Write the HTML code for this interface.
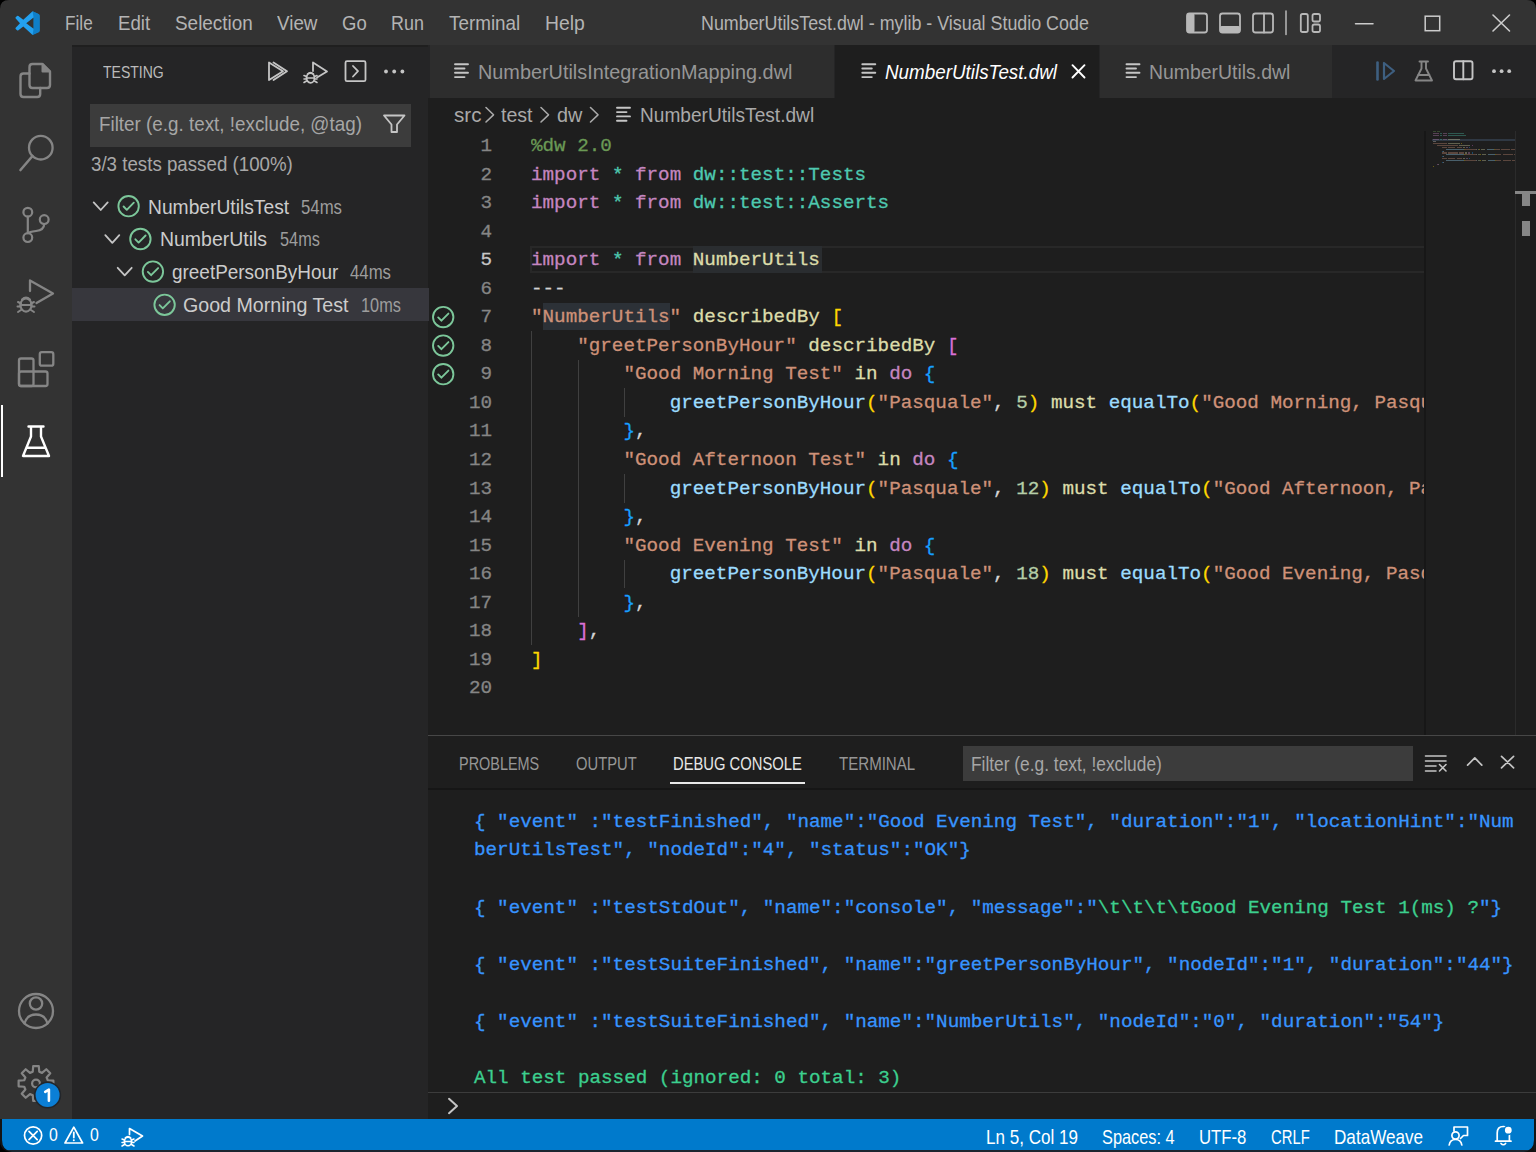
<!DOCTYPE html>
<html><head><meta charset="utf-8"><style>
html,body{margin:0;padding:0;}
body{width:1536px;height:1152px;position:relative;overflow:hidden;background:#1e1e1e;}
.t{position:absolute;white-space:pre;font-family:"Liberation Sans",sans-serif;transform-origin:0 0;}
.m{position:absolute;white-space:pre;font-family:"Liberation Mono",monospace;-webkit-text-stroke:0.3px currentColor;}
.m span{-webkit-text-stroke:0.3px currentColor;}
svg.ov{position:absolute;left:0;top:0;}
</style></head><body>
<div style="position:absolute;left:0.00px;top:0.00px;width:1536.00px;height:45.00px;background:#333333;"></div>
<div style="position:absolute;left:0.00px;top:45.00px;width:72.00px;height:1074.00px;background:#333333;"></div>
<div style="position:absolute;left:72.00px;top:45.00px;width:356.00px;height:1074.00px;background:#252526;"></div>
<div style="position:absolute;left:72.00px;top:45.00px;width:356.00px;height:2.00px;background:#1f1f1f;"></div>
<div style="position:absolute;left:428.00px;top:45.00px;width:1108.00px;height:53.00px;background:#252526;"></div>
<div style="position:absolute;left:428.00px;top:98.00px;width:1108.00px;height:637.00px;background:#1e1e1e;"></div>
<div style="position:absolute;left:428.00px;top:735.00px;width:1108.00px;height:384.00px;background:#1e1e1e;"></div>
<div style="position:absolute;left:428.00px;top:735.00px;width:1108.00px;height:1.00px;background:#474747;"></div>
<div style="position:absolute;left:0.00px;top:1119.00px;width:1536.00px;height:33.00px;background:#007acc;"></div>
<div class="t" style="left:65.40px;top:11.96px;font-size:20.349px;line-height:22.75px;color:#b4b4b4;transform:scaleX(0.8450);">File</div>
<div class="t" style="left:118.30px;top:11.96px;font-size:20.349px;line-height:22.75px;color:#b4b4b4;transform:scaleX(0.9184);">Edit</div>
<div class="t" style="left:174.80px;top:11.96px;font-size:20.349px;line-height:22.75px;color:#b4b4b4;transform:scaleX(0.9305);">Selection</div>
<div class="t" style="left:277.00px;top:11.96px;font-size:20.349px;line-height:22.75px;color:#b4b4b4;transform:scaleX(0.9249);">View</div>
<div class="t" style="left:341.80px;top:11.96px;font-size:20.349px;line-height:22.75px;color:#b4b4b4;transform:scaleX(0.9099);">Go</div>
<div class="t" style="left:391.20px;top:11.96px;font-size:20.349px;line-height:22.75px;color:#b4b4b4;transform:scaleX(0.8816);">Run</div>
<div class="t" style="left:449.00px;top:11.96px;font-size:20.349px;line-height:22.75px;color:#b4b4b4;transform:scaleX(0.9272);">Terminal</div>
<div class="t" style="left:545.40px;top:11.96px;font-size:20.349px;line-height:22.75px;color:#b4b4b4;transform:scaleX(0.9508);">Help</div>
<div class="t" style="left:700.60px;top:11.96px;font-size:20.349px;line-height:22.75px;color:#b4b4b4;transform:scaleX(0.8787);">NumberUtilsTest.dwl - mylib - Visual Studio Code</div>
<div class="t" style="left:103.30px;top:63.16px;font-size:17.151px;line-height:19.18px;color:#bbbbbb;transform:scaleX(0.8179);">TESTING</div>
<div style="position:absolute;left:90.00px;top:104.00px;width:321.00px;height:43.00px;background:#3c3c3c;"></div>
<div class="t" style="left:98.60px;top:112.96px;font-size:20.349px;line-height:22.75px;color:#a6a6a6;transform:scaleX(0.9262);">Filter (e.g. text, !exclude, @tag)</div>
<div class="t" style="left:91.00px;top:153.19px;font-size:19.767px;line-height:22.10px;color:#a8a8a8;transform:scaleX(0.9476);">3/3 tests passed (100%)</div>
<div style="position:absolute;left:72.00px;top:288.00px;width:357.00px;height:32.60px;background:#37373d;"></div>
<div class="t" style="left:147.50px;top:195.69px;font-size:19.767px;line-height:22.10px;color:#cccccc;transform:scaleX(0.9745);">NumberUtilsTest</div>
<div class="t" style="left:301.00px;top:195.69px;font-size:19.767px;line-height:22.10px;color:#9d9d9d;transform:scaleX(0.8483);">54ms</div>
<div class="t" style="left:159.90px;top:228.49px;font-size:19.767px;line-height:22.10px;color:#cccccc;transform:scaleX(0.9849);">NumberUtils</div>
<div class="t" style="left:280.10px;top:228.49px;font-size:19.767px;line-height:22.10px;color:#9d9d9d;transform:scaleX(0.8256);">54ms</div>
<div class="t" style="left:171.60px;top:260.89px;font-size:19.767px;line-height:22.10px;color:#cccccc;transform:scaleX(0.9585);">greetPersonByHour</div>
<div class="t" style="left:349.70px;top:260.89px;font-size:19.767px;line-height:22.10px;color:#9d9d9d;transform:scaleX(0.8483);">44ms</div>
<div class="t" style="left:183.30px;top:293.69px;font-size:19.767px;line-height:22.10px;color:#cccccc;transform:scaleX(0.9942);">Good Morning Test</div>
<div class="t" style="left:361.40px;top:293.69px;font-size:19.767px;line-height:22.10px;color:#9d9d9d;transform:scaleX(0.8256);">10ms</div>
<div style="position:absolute;left:430.00px;top:45.00px;width:404.00px;height:53.00px;background:#2d2d2d;"></div>
<div style="position:absolute;left:835.00px;top:45.00px;width:264.00px;height:53.00px;background:#1e1e1e;"></div>
<div style="position:absolute;left:1100.00px;top:45.00px;width:232.00px;height:53.00px;background:#2d2d2d;"></div>
<div class="t" style="left:477.60px;top:61.26px;font-size:20.349px;line-height:22.75px;color:#969696;transform:scaleX(0.9763);">NumberUtilsIntegrationMapping.dwl</div>
<div class="t" style="left:884.80px;top:61.26px;font-size:20.349px;line-height:22.75px;color:#ffffff;font-style:italic;transform:scaleX(0.9265);">NumberUtilsTest.dwl</div>
<div class="t" style="left:1149.40px;top:61.26px;font-size:20.349px;line-height:22.75px;color:#969696;transform:scaleX(0.9546);">NumberUtils.dwl</div>
<div class="t" style="left:453.50px;top:104.16px;font-size:20.349px;line-height:22.75px;color:#a9a9a9;transform:scaleX(1.0138);">src</div>
<div class="t" style="left:501.00px;top:104.16px;font-size:20.349px;line-height:22.75px;color:#a9a9a9;transform:scaleX(0.9633);">test</div>
<div class="t" style="left:556.80px;top:104.16px;font-size:20.349px;line-height:22.75px;color:#a9a9a9;transform:scaleX(0.9744);">dw</div>
<div class="t" style="left:640.00px;top:104.16px;font-size:20.349px;line-height:22.75px;color:#a9a9a9;transform:scaleX(0.9399);">NumberUtilsTest.dwl</div>
<div style="position:absolute;left:530.00px;top:246.32px;width:894.00px;height:27.00px;background:transparent;box-sizing:border-box;border:2px solid #282828;border-right:none;"></div>
<div style="position:absolute;left:693.00px;top:246.32px;width:129.00px;height:27.00px;background:#2a2d30;"></div>
<div style="position:absolute;left:542.60px;top:303.38px;width:127.00px;height:27.00px;background:#2c3137;"></div>
<div style="position:absolute;left:531.00px;top:331.41px;width:1.20px;height:313.83px;background:#404040;"></div>
<div style="position:absolute;left:577.50px;top:359.94px;width:1.20px;height:256.77px;background:#404040;"></div>
<div style="position:absolute;left:624.00px;top:388.47px;width:1.20px;height:28.53px;background:#404040;"></div>
<div style="position:absolute;left:624.00px;top:474.06px;width:1.20px;height:28.53px;background:#404040;"></div>
<div style="position:absolute;left:624.00px;top:559.65px;width:1.20px;height:28.53px;background:#404040;"></div>
<div style="position:absolute;left:531px;top:130px;width:893px;height:605px;overflow:hidden">
<div class="m" style="left:0.00px;top:6.16px;font-size:19.250px;line-height:21.83px"><span style="color:#6a9955">%dw 2.0</span></div>
<div class="m" style="left:0.00px;top:34.69px;font-size:19.250px;line-height:21.83px"><span style="color:#c586c0">import</span><span style="color:#d4d4d4"> </span><span style="color:#4ec9b0">*</span><span style="color:#d4d4d4"> </span><span style="color:#c586c0">from</span><span style="color:#d4d4d4"> </span><span style="color:#4ec9b0">dw::test::Tests</span></div>
<div class="m" style="left:0.00px;top:63.22px;font-size:19.250px;line-height:21.83px"><span style="color:#c586c0">import</span><span style="color:#d4d4d4"> </span><span style="color:#4ec9b0">*</span><span style="color:#d4d4d4"> </span><span style="color:#c586c0">from</span><span style="color:#d4d4d4"> </span><span style="color:#4ec9b0">dw::test::Asserts</span></div>
<div class="m" style="left:0.00px;top:120.28px;font-size:19.250px;line-height:21.83px"><span style="color:#c586c0">import</span><span style="color:#d4d4d4"> </span><span style="color:#4ec9b0">*</span><span style="color:#d4d4d4"> </span><span style="color:#c586c0">from</span><span style="color:#d4d4d4"> </span><span style="color:#dcdcaa">NumberUtils</span></div>
<div class="m" style="left:0.00px;top:148.81px;font-size:19.250px;line-height:21.83px"><span style="color:#d4d4d4">---</span></div>
<div class="m" style="left:0.00px;top:177.34px;font-size:19.250px;line-height:21.83px"><span style="color:#ce9178">&quot;NumberUtils&quot;</span><span style="color:#d4d4d4"> </span><span style="color:#dcdcaa">describedBy</span><span style="color:#d4d4d4"> </span><span style="color:#ffd700">[</span></div>
<div class="m" style="left:0.00px;top:205.87px;font-size:19.250px;line-height:21.83px"><span style="color:#d4d4d4">    </span><span style="color:#ce9178">&quot;greetPersonByHour&quot;</span><span style="color:#d4d4d4"> </span><span style="color:#dcdcaa">describedBy</span><span style="color:#d4d4d4"> </span><span style="color:#da70d6">[</span></div>
<div class="m" style="left:0.00px;top:234.40px;font-size:19.250px;line-height:21.83px"><span style="color:#d4d4d4">        </span><span style="color:#ce9178">&quot;Good Morning Test&quot;</span><span style="color:#d4d4d4"> </span><span style="color:#dcdcaa">in</span><span style="color:#d4d4d4"> </span><span style="color:#c586c0">do</span><span style="color:#d4d4d4"> </span><span style="color:#179fff">{</span></div>
<div class="m" style="left:0.00px;top:262.93px;font-size:19.250px;line-height:21.83px"><span style="color:#d4d4d4">            </span><span style="color:#9cdcfe">greetPersonByHour</span><span style="color:#ffd700">(</span><span style="color:#ce9178">&quot;Pasquale&quot;</span><span style="color:#d4d4d4">, </span><span style="color:#b5cea8">5</span><span style="color:#ffd700">)</span><span style="color:#d4d4d4"> </span><span style="color:#dcdcaa">must</span><span style="color:#d4d4d4"> </span><span style="color:#9cdcfe">equalTo</span><span style="color:#ffd700">(</span><span style="color:#ce9178">&quot;Good Morning, Pasquale&quot;</span><span style="color:#ffd700">)</span></div>
<div class="m" style="left:0.00px;top:291.46px;font-size:19.250px;line-height:21.83px"><span style="color:#d4d4d4">        </span><span style="color:#179fff">}</span><span style="color:#d4d4d4">,</span></div>
<div class="m" style="left:0.00px;top:319.99px;font-size:19.250px;line-height:21.83px"><span style="color:#d4d4d4">        </span><span style="color:#ce9178">&quot;Good Afternoon Test&quot;</span><span style="color:#d4d4d4"> </span><span style="color:#dcdcaa">in</span><span style="color:#d4d4d4"> </span><span style="color:#c586c0">do</span><span style="color:#d4d4d4"> </span><span style="color:#179fff">{</span></div>
<div class="m" style="left:0.00px;top:348.52px;font-size:19.250px;line-height:21.83px"><span style="color:#d4d4d4">            </span><span style="color:#9cdcfe">greetPersonByHour</span><span style="color:#ffd700">(</span><span style="color:#ce9178">&quot;Pasquale&quot;</span><span style="color:#d4d4d4">, </span><span style="color:#b5cea8">12</span><span style="color:#ffd700">)</span><span style="color:#d4d4d4"> </span><span style="color:#dcdcaa">must</span><span style="color:#d4d4d4"> </span><span style="color:#9cdcfe">equalTo</span><span style="color:#ffd700">(</span><span style="color:#ce9178">&quot;Good Afternoon, Pasquale&quot;</span><span style="color:#ffd700">)</span></div>
<div class="m" style="left:0.00px;top:377.05px;font-size:19.250px;line-height:21.83px"><span style="color:#d4d4d4">        </span><span style="color:#179fff">}</span><span style="color:#d4d4d4">,</span></div>
<div class="m" style="left:0.00px;top:405.58px;font-size:19.250px;line-height:21.83px"><span style="color:#d4d4d4">        </span><span style="color:#ce9178">&quot;Good Evening Test&quot;</span><span style="color:#d4d4d4"> </span><span style="color:#dcdcaa">in</span><span style="color:#d4d4d4"> </span><span style="color:#c586c0">do</span><span style="color:#d4d4d4"> </span><span style="color:#179fff">{</span></div>
<div class="m" style="left:0.00px;top:434.11px;font-size:19.250px;line-height:21.83px"><span style="color:#d4d4d4">            </span><span style="color:#9cdcfe">greetPersonByHour</span><span style="color:#ffd700">(</span><span style="color:#ce9178">&quot;Pasquale&quot;</span><span style="color:#d4d4d4">, </span><span style="color:#b5cea8">18</span><span style="color:#ffd700">)</span><span style="color:#d4d4d4"> </span><span style="color:#dcdcaa">must</span><span style="color:#d4d4d4"> </span><span style="color:#9cdcfe">equalTo</span><span style="color:#ffd700">(</span><span style="color:#ce9178">&quot;Good Evening, Pasquale&quot;</span><span style="color:#ffd700">)</span></div>
<div class="m" style="left:0.00px;top:462.64px;font-size:19.250px;line-height:21.83px"><span style="color:#d4d4d4">        </span><span style="color:#179fff">}</span><span style="color:#d4d4d4">,</span></div>
<div class="m" style="left:0.00px;top:491.17px;font-size:19.250px;line-height:21.83px"><span style="color:#d4d4d4">    </span><span style="color:#da70d6">]</span><span style="color:#d4d4d4">,</span></div>
<div class="m" style="left:0.00px;top:519.70px;font-size:19.250px;line-height:21.83px"><span style="color:#ffd700">]</span></div>
</div>
<div class="m" style="left:480.45px;top:136.16px;font-size:19.250px;line-height:21.83px"><span style="color:#858585">1</span></div>
<div class="m" style="left:480.45px;top:164.69px;font-size:19.250px;line-height:21.83px"><span style="color:#858585">2</span></div>
<div class="m" style="left:480.45px;top:193.22px;font-size:19.250px;line-height:21.83px"><span style="color:#858585">3</span></div>
<div class="m" style="left:480.45px;top:221.75px;font-size:19.250px;line-height:21.83px"><span style="color:#858585">4</span></div>
<div class="m" style="left:480.45px;top:250.28px;font-size:19.250px;line-height:21.83px"><span style="color:#c6c6c6">5</span></div>
<div class="m" style="left:480.45px;top:278.81px;font-size:19.250px;line-height:21.83px"><span style="color:#858585">6</span></div>
<div class="m" style="left:480.45px;top:307.34px;font-size:19.250px;line-height:21.83px"><span style="color:#858585">7</span></div>
<div class="m" style="left:480.45px;top:335.87px;font-size:19.250px;line-height:21.83px"><span style="color:#858585">8</span></div>
<div class="m" style="left:480.45px;top:364.40px;font-size:19.250px;line-height:21.83px"><span style="color:#858585">9</span></div>
<div class="m" style="left:468.90px;top:392.93px;font-size:19.250px;line-height:21.83px"><span style="color:#858585">10</span></div>
<div class="m" style="left:468.90px;top:421.46px;font-size:19.250px;line-height:21.83px"><span style="color:#858585">11</span></div>
<div class="m" style="left:468.90px;top:449.99px;font-size:19.250px;line-height:21.83px"><span style="color:#858585">12</span></div>
<div class="m" style="left:468.90px;top:478.52px;font-size:19.250px;line-height:21.83px"><span style="color:#858585">13</span></div>
<div class="m" style="left:468.90px;top:507.05px;font-size:19.250px;line-height:21.83px"><span style="color:#858585">14</span></div>
<div class="m" style="left:468.90px;top:535.58px;font-size:19.250px;line-height:21.83px"><span style="color:#858585">15</span></div>
<div class="m" style="left:468.90px;top:564.11px;font-size:19.250px;line-height:21.83px"><span style="color:#858585">16</span></div>
<div class="m" style="left:468.90px;top:592.64px;font-size:19.250px;line-height:21.83px"><span style="color:#858585">17</span></div>
<div class="m" style="left:468.90px;top:621.17px;font-size:19.250px;line-height:21.83px"><span style="color:#858585">18</span></div>
<div class="m" style="left:468.90px;top:649.70px;font-size:19.250px;line-height:21.83px"><span style="color:#858585">19</span></div>
<div class="m" style="left:468.90px;top:678.23px;font-size:19.250px;line-height:21.83px"><span style="color:#858585">20</span></div>
<div style="position:absolute;left:1424.00px;top:131.00px;width:2.00px;height:604.00px;background:#171717;"></div>
<div style="position:absolute;left:1515.00px;top:131.00px;width:1.00px;height:604.00px;background:#2b2b2b;"></div>
<div class="t" style="left:459.20px;top:754.14px;font-size:18.605px;line-height:20.80px;color:#969696;transform:scaleX(0.7767);">PROBLEMS</div>
<div class="t" style="left:576.20px;top:754.14px;font-size:18.605px;line-height:20.80px;color:#969696;transform:scaleX(0.7936);">OUTPUT</div>
<div class="t" style="left:673.20px;top:754.14px;font-size:18.605px;line-height:20.80px;color:#e7e7e7;transform:scaleX(0.7942);">DEBUG CONSOLE</div>
<div class="t" style="left:838.50px;top:754.14px;font-size:18.605px;line-height:20.80px;color:#969696;transform:scaleX(0.8101);">TERMINAL</div>
<div style="position:absolute;left:669.80px;top:781.50px;width:135.00px;height:2.00px;background:#e7e7e7;"></div>
<div style="position:absolute;left:428.00px;top:788.00px;width:1108.00px;height:2.00px;background:#161616;"></div>
<div style="position:absolute;left:963.30px;top:745.50px;width:449.30px;height:35.00px;background:#3c3c3c;"></div>
<div class="t" style="left:971.00px;top:753.06px;font-size:20.349px;line-height:22.75px;color:#a6a6a6;transform:scaleX(0.8530);">Filter (e.g. text, !exclude)</div>
<div class="m" style="left:474.00px;top:811.96px;font-size:19.250px;line-height:21.83px"><span style="color:#3794ff">{ &quot;event&quot; :&quot;testFinished&quot;, &quot;name&quot;:&quot;Good Evening Test&quot;, &quot;duration&quot;:&quot;1&quot;, &quot;locationHint&quot;:&quot;Num</span></div>
<div class="m" style="left:474.00px;top:840.46px;font-size:19.250px;line-height:21.83px"><span style="color:#3794ff">berUtilsTest&quot;, &quot;nodeId&quot;:&quot;4&quot;, &quot;status&quot;:&quot;OK&quot;}</span></div>
<div class="m" style="left:474.00px;top:897.96px;font-size:19.250px;line-height:21.83px"><span style="color:#3794ff">{ &quot;event&quot; :&quot;testStdOut&quot;, &quot;name&quot;:&quot;console&quot;, &quot;message&quot;:&quot;</span><span style="color:#3ccf8e">\t\t\t\tGood Evening Test 1(ms) ?</span><span style="color:#3794ff">&quot;}</span></div>
<div class="m" style="left:474.00px;top:954.96px;font-size:19.250px;line-height:21.83px"><span style="color:#3794ff">{ &quot;event&quot; :&quot;testSuiteFinished&quot;, &quot;name&quot;:&quot;greetPersonByHour&quot;, &quot;nodeId&quot;:&quot;1&quot;, &quot;duration&quot;:&quot;44&quot;}</span></div>
<div class="m" style="left:474.00px;top:1011.96px;font-size:19.250px;line-height:21.83px"><span style="color:#3794ff">{ &quot;event&quot; :&quot;testSuiteFinished&quot;, &quot;name&quot;:&quot;NumberUtils&quot;, &quot;nodeId&quot;:&quot;0&quot;, &quot;duration&quot;:&quot;54&quot;}</span></div>
<div class="m" style="left:474.00px;top:1068.46px;font-size:19.250px;line-height:21.83px"><span style="color:#3ccf8e">All test passed (ignored: 0 total: 3)</span></div>
<div style="position:absolute;left:428.00px;top:1091.50px;width:1108.00px;height:1.00px;background:#3c3c3c;"></div>
<div class="t" style="left:49.00px;top:1126.30px;font-size:17.442px;line-height:19.50px;color:#ffffff;transform:scaleX(0.9074);">0</div>
<div class="t" style="left:89.60px;top:1126.30px;font-size:17.442px;line-height:19.50px;color:#ffffff;transform:scaleX(0.9074);">0</div>
<div class="t" style="left:985.80px;top:1126.19px;font-size:19.767px;line-height:22.10px;color:#ffffff;transform:scaleX(0.8630);">Ln 5, Col 19</div>
<div class="t" style="left:1102.20px;top:1126.19px;font-size:19.767px;line-height:22.10px;color:#ffffff;transform:scaleX(0.8259);">Spaces: 4</div>
<div class="t" style="left:1199.20px;top:1126.19px;font-size:19.767px;line-height:22.10px;color:#ffffff;transform:scaleX(0.8464);">UTF-8</div>
<div class="t" style="left:1270.60px;top:1126.19px;font-size:19.767px;line-height:22.10px;color:#ffffff;transform:scaleX(0.7518);">CRLF</div>
<div class="t" style="left:1333.90px;top:1126.19px;font-size:19.767px;line-height:22.10px;color:#ffffff;transform:scaleX(0.8666);">DataWeave</div>
<div style="position:absolute;left:1.00px;top:405.00px;width:2.00px;height:72.00px;background:#ffffff;"></div>
<div style="position:absolute;left:1432.00px;top:138.50px;width:83.00px;height:2.30px;background:#3a4a5c;opacity:0.6"></div>
<div style="position:absolute;left:1433.00px;top:131.00px;width:3.21px;height:1.10px;background:#6a9955;opacity:0.35"></div>
<div style="position:absolute;left:1437.28px;top:131.00px;width:3.21px;height:1.10px;background:#6a9955;opacity:0.35"></div>
<div style="position:absolute;left:1433.00px;top:132.95px;width:6.42px;height:1.10px;background:#c586c0;opacity:0.35"></div>
<div style="position:absolute;left:1440.49px;top:132.95px;width:1.07px;height:1.10px;background:#4ec9b0;opacity:0.35"></div>
<div style="position:absolute;left:1442.63px;top:132.95px;width:4.28px;height:1.10px;background:#c586c0;opacity:0.35"></div>
<div style="position:absolute;left:1447.98px;top:132.95px;width:16.05px;height:1.10px;background:#4ec9b0;opacity:0.35"></div>
<div style="position:absolute;left:1433.00px;top:134.90px;width:6.42px;height:1.10px;background:#c586c0;opacity:0.35"></div>
<div style="position:absolute;left:1440.49px;top:134.90px;width:1.07px;height:1.10px;background:#4ec9b0;opacity:0.35"></div>
<div style="position:absolute;left:1442.63px;top:134.90px;width:4.28px;height:1.10px;background:#c586c0;opacity:0.35"></div>
<div style="position:absolute;left:1447.98px;top:134.90px;width:18.19px;height:1.10px;background:#4ec9b0;opacity:0.35"></div>
<div style="position:absolute;left:1433.00px;top:138.80px;width:6.42px;height:1.10px;background:#c586c0;opacity:0.35"></div>
<div style="position:absolute;left:1440.49px;top:138.80px;width:1.07px;height:1.10px;background:#4ec9b0;opacity:0.35"></div>
<div style="position:absolute;left:1442.63px;top:138.80px;width:4.28px;height:1.10px;background:#c586c0;opacity:0.35"></div>
<div style="position:absolute;left:1447.98px;top:138.80px;width:11.77px;height:1.10px;background:#dcdcaa;opacity:0.35"></div>
<div style="position:absolute;left:1433.00px;top:140.75px;width:3.21px;height:1.10px;background:#d4d4d4;opacity:0.35"></div>
<div style="position:absolute;left:1433.00px;top:142.70px;width:13.91px;height:1.10px;background:#ce9178;opacity:0.35"></div>
<div style="position:absolute;left:1447.98px;top:142.70px;width:11.77px;height:1.10px;background:#dcdcaa;opacity:0.35"></div>
<div style="position:absolute;left:1460.82px;top:142.70px;width:1.07px;height:1.10px;background:#ffd700;opacity:0.35"></div>
<div style="position:absolute;left:1437.28px;top:144.65px;width:20.33px;height:1.10px;background:#ce9178;opacity:0.35"></div>
<div style="position:absolute;left:1458.68px;top:144.65px;width:11.77px;height:1.10px;background:#dcdcaa;opacity:0.35"></div>
<div style="position:absolute;left:1471.52px;top:144.65px;width:1.07px;height:1.10px;background:#da70d6;opacity:0.35"></div>
<div style="position:absolute;left:1441.56px;top:146.60px;width:5.35px;height:1.10px;background:#ce9178;opacity:0.35"></div>
<div style="position:absolute;left:1447.98px;top:146.60px;width:7.49px;height:1.10px;background:#ce9178;opacity:0.35"></div>
<div style="position:absolute;left:1456.54px;top:146.60px;width:5.35px;height:1.10px;background:#ce9178;opacity:0.35"></div>
<div style="position:absolute;left:1462.96px;top:146.60px;width:2.14px;height:1.10px;background:#dcdcaa;opacity:0.35"></div>
<div style="position:absolute;left:1466.17px;top:146.60px;width:2.14px;height:1.10px;background:#c586c0;opacity:0.35"></div>
<div style="position:absolute;left:1469.38px;top:146.60px;width:1.07px;height:1.10px;background:#179fff;opacity:0.35"></div>
<div style="position:absolute;left:1445.84px;top:148.55px;width:18.19px;height:1.10px;background:#9cdcfe;opacity:0.35"></div>
<div style="position:absolute;left:1464.03px;top:148.55px;width:1.07px;height:1.10px;background:#ffd700;opacity:0.35"></div>
<div style="position:absolute;left:1465.10px;top:148.55px;width:10.70px;height:1.10px;background:#ce9178;opacity:0.35"></div>
<div style="position:absolute;left:1475.80px;top:148.55px;width:1.07px;height:1.10px;background:#d4d4d4;opacity:0.35"></div>
<div style="position:absolute;left:1477.94px;top:148.55px;width:1.07px;height:1.10px;background:#b5cea8;opacity:0.35"></div>
<div style="position:absolute;left:1479.01px;top:148.55px;width:1.07px;height:1.10px;background:#ffd700;opacity:0.35"></div>
<div style="position:absolute;left:1481.15px;top:148.55px;width:4.28px;height:1.10px;background:#dcdcaa;opacity:0.35"></div>
<div style="position:absolute;left:1486.50px;top:148.55px;width:7.49px;height:1.10px;background:#9cdcfe;opacity:0.35"></div>
<div style="position:absolute;left:1493.99px;top:148.55px;width:1.07px;height:1.10px;background:#ffd700;opacity:0.35"></div>
<div style="position:absolute;left:1495.06px;top:148.55px;width:5.35px;height:1.10px;background:#ce9178;opacity:0.35"></div>
<div style="position:absolute;left:1501.48px;top:148.55px;width:8.56px;height:1.10px;background:#ce9178;opacity:0.35"></div>
<div style="position:absolute;left:1511.11px;top:148.55px;width:3.89px;height:1.10px;background:#ce9178;opacity:0.35"></div>
<div style="position:absolute;left:1441.56px;top:150.50px;width:1.07px;height:1.10px;background:#179fff;opacity:0.35"></div>
<div style="position:absolute;left:1442.63px;top:150.50px;width:1.07px;height:1.10px;background:#d4d4d4;opacity:0.35"></div>
<div style="position:absolute;left:1441.56px;top:152.45px;width:5.35px;height:1.10px;background:#ce9178;opacity:0.35"></div>
<div style="position:absolute;left:1447.98px;top:152.45px;width:9.63px;height:1.10px;background:#ce9178;opacity:0.35"></div>
<div style="position:absolute;left:1458.68px;top:152.45px;width:5.35px;height:1.10px;background:#ce9178;opacity:0.35"></div>
<div style="position:absolute;left:1465.10px;top:152.45px;width:2.14px;height:1.10px;background:#dcdcaa;opacity:0.35"></div>
<div style="position:absolute;left:1468.31px;top:152.45px;width:2.14px;height:1.10px;background:#c586c0;opacity:0.35"></div>
<div style="position:absolute;left:1471.52px;top:152.45px;width:1.07px;height:1.10px;background:#179fff;opacity:0.35"></div>
<div style="position:absolute;left:1445.84px;top:154.40px;width:18.19px;height:1.10px;background:#9cdcfe;opacity:0.35"></div>
<div style="position:absolute;left:1464.03px;top:154.40px;width:1.07px;height:1.10px;background:#ffd700;opacity:0.35"></div>
<div style="position:absolute;left:1465.10px;top:154.40px;width:10.70px;height:1.10px;background:#ce9178;opacity:0.35"></div>
<div style="position:absolute;left:1475.80px;top:154.40px;width:1.07px;height:1.10px;background:#d4d4d4;opacity:0.35"></div>
<div style="position:absolute;left:1477.94px;top:154.40px;width:2.14px;height:1.10px;background:#b5cea8;opacity:0.35"></div>
<div style="position:absolute;left:1480.08px;top:154.40px;width:1.07px;height:1.10px;background:#ffd700;opacity:0.35"></div>
<div style="position:absolute;left:1482.22px;top:154.40px;width:4.28px;height:1.10px;background:#dcdcaa;opacity:0.35"></div>
<div style="position:absolute;left:1487.57px;top:154.40px;width:7.49px;height:1.10px;background:#9cdcfe;opacity:0.35"></div>
<div style="position:absolute;left:1495.06px;top:154.40px;width:1.07px;height:1.10px;background:#ffd700;opacity:0.35"></div>
<div style="position:absolute;left:1496.13px;top:154.40px;width:5.35px;height:1.10px;background:#ce9178;opacity:0.35"></div>
<div style="position:absolute;left:1502.55px;top:154.40px;width:10.70px;height:1.10px;background:#ce9178;opacity:0.35"></div>
<div style="position:absolute;left:1514.32px;top:154.40px;width:0.68px;height:1.10px;background:#ce9178;opacity:0.35"></div>
<div style="position:absolute;left:1441.56px;top:156.35px;width:1.07px;height:1.10px;background:#179fff;opacity:0.35"></div>
<div style="position:absolute;left:1442.63px;top:156.35px;width:1.07px;height:1.10px;background:#d4d4d4;opacity:0.35"></div>
<div style="position:absolute;left:1441.56px;top:158.30px;width:5.35px;height:1.10px;background:#ce9178;opacity:0.35"></div>
<div style="position:absolute;left:1447.98px;top:158.30px;width:7.49px;height:1.10px;background:#ce9178;opacity:0.35"></div>
<div style="position:absolute;left:1456.54px;top:158.30px;width:5.35px;height:1.10px;background:#ce9178;opacity:0.35"></div>
<div style="position:absolute;left:1462.96px;top:158.30px;width:2.14px;height:1.10px;background:#dcdcaa;opacity:0.35"></div>
<div style="position:absolute;left:1466.17px;top:158.30px;width:2.14px;height:1.10px;background:#c586c0;opacity:0.35"></div>
<div style="position:absolute;left:1469.38px;top:158.30px;width:1.07px;height:1.10px;background:#179fff;opacity:0.35"></div>
<div style="position:absolute;left:1445.84px;top:160.25px;width:18.19px;height:1.10px;background:#9cdcfe;opacity:0.35"></div>
<div style="position:absolute;left:1464.03px;top:160.25px;width:1.07px;height:1.10px;background:#ffd700;opacity:0.35"></div>
<div style="position:absolute;left:1465.10px;top:160.25px;width:10.70px;height:1.10px;background:#ce9178;opacity:0.35"></div>
<div style="position:absolute;left:1475.80px;top:160.25px;width:1.07px;height:1.10px;background:#d4d4d4;opacity:0.35"></div>
<div style="position:absolute;left:1477.94px;top:160.25px;width:2.14px;height:1.10px;background:#b5cea8;opacity:0.35"></div>
<div style="position:absolute;left:1480.08px;top:160.25px;width:1.07px;height:1.10px;background:#ffd700;opacity:0.35"></div>
<div style="position:absolute;left:1482.22px;top:160.25px;width:4.28px;height:1.10px;background:#dcdcaa;opacity:0.35"></div>
<div style="position:absolute;left:1487.57px;top:160.25px;width:7.49px;height:1.10px;background:#9cdcfe;opacity:0.35"></div>
<div style="position:absolute;left:1495.06px;top:160.25px;width:1.07px;height:1.10px;background:#ffd700;opacity:0.35"></div>
<div style="position:absolute;left:1496.13px;top:160.25px;width:5.35px;height:1.10px;background:#ce9178;opacity:0.35"></div>
<div style="position:absolute;left:1502.55px;top:160.25px;width:8.56px;height:1.10px;background:#ce9178;opacity:0.35"></div>
<div style="position:absolute;left:1512.18px;top:160.25px;width:2.82px;height:1.10px;background:#ce9178;opacity:0.35"></div>
<div style="position:absolute;left:1441.56px;top:162.20px;width:1.07px;height:1.10px;background:#179fff;opacity:0.35"></div>
<div style="position:absolute;left:1442.63px;top:162.20px;width:1.07px;height:1.10px;background:#d4d4d4;opacity:0.35"></div>
<div style="position:absolute;left:1437.28px;top:164.15px;width:1.07px;height:1.10px;background:#da70d6;opacity:0.35"></div>
<div style="position:absolute;left:1438.35px;top:164.15px;width:1.07px;height:1.10px;background:#d4d4d4;opacity:0.35"></div>
<div style="position:absolute;left:1433.00px;top:166.10px;width:1.07px;height:1.10px;background:#ffd700;opacity:0.35"></div>
<div style="position:absolute;left:1515.00px;top:191.00px;width:21.00px;height:2.50px;background:#a0a0a0;opacity:0.8"></div>
<div style="position:absolute;left:1522.00px;top:193.50px;width:8.00px;height:12.00px;background:#a0a0a0;opacity:0.8"></div>
<div style="position:absolute;left:1522.00px;top:221.00px;width:8.00px;height:15.00px;background:#a0a0a0;opacity:0.8"></div>
<div style="position:absolute;left:0.00px;top:1150.00px;width:1536.00px;height:2.00px;background:#1c2630;"></div>
<div style="position:absolute;left:0.00px;top:1119.00px;width:2.00px;height:33.00px;background:#141414;"></div>
<div style="position:absolute;left:1534.00px;top:1119.00px;width:2.00px;height:33.00px;background:#141414;"></div>
<svg class="ov" width="1536" height="1152" viewBox="0 0 1536 1152" fill="none">
<g transform="translate(15.2,10.9) scale(0.245)"><path fill-rule="evenodd" fill="#23a1f0" d="M71 1.5 L95.5 13 Q100 15 100 20 L100 80 Q100 85 95.5 87 L71 98.5 L33 63.5 L13 79 Q10 81 7.5 79 L2 74 Q0 71.5 2 69 L19.5 50 L2 31 Q0 28.5 2 26 L7.5 21 Q10 19 13 21 L33 36.5 Z M75 27 L45 50 L75 73 Z"/><path fill="#0065a9" opacity="0.55" d="M71 1.5 L95.5 13 Q100 15 100 20 L100 80 Q100 85 95.5 87 L71 98.5 L75 73 L75 27 Z"/></g>
<rect x="1187" y="13.5" width="20" height="19" rx="2.5" stroke="#b8b8b8" stroke-width="1.8"/>
<rect x="1187" y="13.5" width="7.5" height="19" rx="1.5" fill="#b8b8b8"/>
<rect x="1220" y="13.5" width="20" height="19" rx="2.5" stroke="#b8b8b8" stroke-width="1.8"/>
<rect x="1220" y="26" width="20" height="6.5" rx="1.5" fill="#b8b8b8"/>
<rect x="1253" y="13.5" width="20" height="19" rx="2.5" stroke="#b8b8b8" stroke-width="1.8"/>
<path d="M1264 13.5 V32.5" stroke="#b8b8b8" stroke-width="1.8" fill="none" stroke-linejoin="round" stroke-linecap="round" />
<path d="M1286 11 V34.5" stroke="#b8b8b8" stroke-width="1.5" fill="none" stroke-linejoin="round" stroke-linecap="round" />
<rect x="1300.8" y="14" width="7" height="18" rx="1.8" stroke="#b8b8b8" stroke-width="1.8"/>
<rect x="1312.5" y="14" width="7.5" height="7.5" rx="1.8" stroke="#b8b8b8" stroke-width="1.8"/>
<rect x="1312.5" y="24.5" width="7.5" height="7.5" rx="1.8" stroke="#b8b8b8" stroke-width="1.8"/>
<path d="M1355.5 23.8 H1373" stroke="#cccccc" stroke-width="1.5" fill="none" stroke-linejoin="round" stroke-linecap="round" stroke-linecap="butt"/>
<rect x="1425.2" y="16.2" width="14.5" height="14.5" stroke="#cccccc" stroke-width="1.5"/>
<path d="M1493 15 L1509.5 31 M1509.5 15 L1493 31" stroke="#cccccc" stroke-width="1.6" fill="none" stroke-linejoin="round" stroke-linecap="round" />
<path d="M29.5 73.5 H23.5 Q20.5 73.5 20.5 76.5 V94 Q20.5 97 23.5 97 H37.2 Q40.2 97 40.2 94 V88" stroke="#858585" stroke-width="2.4" fill="none" stroke-linejoin="round" stroke-linecap="round" />
<path d="M32.5 64 H42.5 L50 71.5 V85 Q50 88 47 88 H32.5 Q29.5 88 29.5 85 V67 Q29.5 64 32.5 64 Z" stroke="#858585" stroke-width="2.4" fill="none" stroke-linejoin="round" stroke-linecap="round" />
<path d="M42.5 64 V71.5 H50 Z" stroke="#858585" stroke-width="2.0" fill="#858585" stroke-linejoin="round" stroke-linecap="round" />
<circle cx="40.8" cy="147.7" r="11.8" stroke="#858585" stroke-width="2.3" fill="none"/>
<path d="M32.5 156 L20.5 170" stroke="#858585" stroke-width="2.6" fill="none" stroke-linejoin="round" stroke-linecap="round" />
<circle cx="27.8" cy="212.2" r="4.4" stroke="#858585" stroke-width="2.2" fill="none"/>
<circle cx="44.2" cy="219.6" r="4.4" stroke="#858585" stroke-width="2.2" fill="none"/>
<circle cx="27.8" cy="237.6" r="4.4" stroke="#858585" stroke-width="2.2" fill="none"/>
<path d="M27.8 216.6 V233.2 M44.2 224 Q44.2 230 36 231 Q29 232 27.8 233" stroke="#858585" stroke-width="2.2" fill="none" stroke-linejoin="round" stroke-linecap="round" />
<path d="M30 291 V280.5 L53 293.5 L36.5 303" stroke="#858585" stroke-width="2.3" fill="none" stroke-linejoin="round" stroke-linecap="round" />
<g transform="translate(17,295)"><ellipse cx="9" cy="10" rx="5.6" ry="6.6" stroke="#858585" stroke-width="2.1"/><path d="M5 4.5 Q9 0.5 13 4.5 M1 7 L4 8.5 M17 7 L14 8.5 M0.5 11.5 H3.5 M17.5 11.5 H14.5 M1 17 L4 15 M17 17 L14 15 M3.5 10 H14.5" stroke="#858585" stroke-width="2" stroke-linecap="round"/></g>
<rect x="19" y="358.5" width="14.5" height="27.5" rx="2" stroke="#858585" stroke-width="2.3"/>
<rect x="19" y="371.5" width="28.5" height="14.5" rx="2" stroke="#858585" stroke-width="2.3"/>
<rect x="39.8" y="352.2" width="13.5" height="13.5" rx="2" stroke="#858585" stroke-width="2.3"/>
<path d="M28.5 426.5 H43.5 M31 426.5 V436.5 L23 456 H49 L41 436.5 V426.5 M26.5 447.8 H45.5" stroke="#ffffff" stroke-width="2.4" fill="none" stroke-linejoin="round" stroke-linecap="round" />
<circle cx="36" cy="1011" r="17" stroke="#858585" stroke-width="2.3" fill="none"/>
<circle cx="36" cy="1003.5" r="6.2" stroke="#858585" stroke-width="2.3" fill="none"/>
<path d="M24.5 1023.5 Q27 1014.5 36 1014.5 Q45 1014.5 47.5 1023.5" stroke="#858585" stroke-width="2.3" fill="none" stroke-linejoin="round" stroke-linecap="round" />
<path d="M32.75 1071.74 L33.20 1066.12 L38.80 1066.12 L39.25 1071.74 L42.01 1072.88 L46.30 1069.23 L50.27 1073.20 L46.62 1077.49 L47.76 1080.25 L53.38 1080.70 L53.38 1086.30 L47.76 1086.75 L46.62 1089.51 L50.27 1093.80 L46.30 1097.77 L42.01 1094.12 L39.25 1095.26 L38.80 1100.88 L33.20 1100.88 L32.75 1095.26 L29.99 1094.12 L25.70 1097.77 L21.73 1093.80 L25.38 1089.51 L24.24 1086.75 L18.62 1086.30 L18.62 1080.70 L24.24 1080.25 L25.38 1077.49 L21.73 1073.20 L25.70 1069.23 L29.99 1072.88 Z" stroke="#858585" stroke-width="2.2" fill="none" stroke-linejoin="round" stroke-linecap="round" />
<circle cx="36" cy="1083.5" r="3.9" stroke="#858585" stroke-width="2.2" fill="none"/>
<circle cx="47.6" cy="1095" r="13.6" stroke="#333333" stroke-width="0" fill="#22262b"/>
<circle cx="47.6" cy="1095" r="12.0" stroke="#333333" stroke-width="0" fill="#0b7fd6"/>
<path d="M45.2 1091.8 L48.9 1089.6 V1100.8" stroke="#ffffff" stroke-width="2.6" fill="none" stroke-linejoin="round" stroke-linecap="round" stroke-linecap="butt" stroke-linejoin="miter"/>
<path d="M269 62.5 V80 L283 71.2 Z" stroke="#c5c5c5" stroke-width="1.8" fill="none" stroke-linejoin="round" stroke-linecap="round" />
<path d="M273.5 62.5 L287 71.2 L273.5 80" stroke="#c5c5c5" stroke-width="1.8" fill="none" stroke-linejoin="round" stroke-linecap="round" />
<path d="M313 71 V62.5 L327 71.5 L317 77.5" stroke="#c5c5c5" stroke-width="1.8" fill="none" stroke-linejoin="round" stroke-linecap="round" />
<g transform="translate(303.5,71.5)"><ellipse cx="7" cy="6.5" rx="4" ry="4.8" stroke="#c5c5c5" stroke-width="1.7"/><path d="M4 2.5 Q7 -0.5 10 2.5 M0.5 4 L3 5 M13.5 4 L11 5 M0.5 7.5 H3 M13.5 7.5 H11 M0.5 11 L3 9.5 M13.5 11 L11 9.5 M3 6.5 H11" stroke="#c5c5c5" stroke-width="1.6" stroke-linecap="round"/></g>
<rect x="345.5" y="61.2" width="20" height="20" rx="1.5" stroke="#c5c5c5" stroke-width="1.8"/>
<path d="M353 66 L358 71.2 L353 76.5" stroke="#c5c5c5" stroke-width="1.8" fill="none" stroke-linejoin="round" stroke-linecap="round" />
<circle cx="386" cy="71.5" r="1.9" stroke="#c5c5c5" stroke-width="0" fill="#c5c5c5"/>
<circle cx="394.2" cy="71.5" r="1.9" stroke="#c5c5c5" stroke-width="0" fill="#c5c5c5"/>
<circle cx="402.4" cy="71.5" r="1.9" stroke="#c5c5c5" stroke-width="0" fill="#c5c5c5"/>
<path d="M384 115.5 H404.5 L397 124.5 V132 H391.5 V124.5 Z" stroke="#c5c5c5" stroke-width="1.8" fill="none" stroke-linejoin="round" stroke-linecap="round" />
<path d="M93.7 202.4 L100.7 210.0 L107.7 202.4" stroke="#c5c5c5" stroke-width="1.8" fill="none" stroke-linejoin="round" stroke-linecap="round" />
<path d="M105.3 235.2 L112.3 242.8 L119.3 235.2" stroke="#c5c5c5" stroke-width="1.8" fill="none" stroke-linejoin="round" stroke-linecap="round" />
<path d="M117.7 267.8 L124.7 275.4 L131.7 267.8" stroke="#c5c5c5" stroke-width="1.8" fill="none" stroke-linejoin="round" stroke-linecap="round" />
<circle cx="128.6" cy="206.2" r="10.2" stroke="#7cc79a" stroke-width="1.9" fill="none"/>
<path d="M123.6 206.5 L126.8 209.8 L133.8 202.7" stroke="#7cc79a" stroke-width="1.9" fill="none" stroke-linejoin="round" stroke-linecap="round" />
<circle cx="140.4" cy="239.0" r="10.2" stroke="#7cc79a" stroke-width="1.9" fill="none"/>
<path d="M135.4 239.3 L138.6 242.6 L145.6 235.5" stroke="#7cc79a" stroke-width="1.9" fill="none" stroke-linejoin="round" stroke-linecap="round" />
<circle cx="152.9" cy="271.6" r="10.2" stroke="#7cc79a" stroke-width="1.9" fill="none"/>
<path d="M147.9 271.9 L151.1 275.2 L158.1 268.1" stroke="#7cc79a" stroke-width="1.9" fill="none" stroke-linejoin="round" stroke-linecap="round" />
<circle cx="164.6" cy="304.8" r="10.2" stroke="#7cc79a" stroke-width="1.9" fill="none"/>
<path d="M159.6 305.1 L162.8 308.4 L169.8 301.3" stroke="#7cc79a" stroke-width="1.9" fill="none" stroke-linejoin="round" stroke-linecap="round" />
<circle cx="443.2" cy="317.08" r="10.2" stroke="#7cc79a" stroke-width="1.9" fill="none"/>
<path d="M438.2 317.4 L441.4 320.7 L448.4 313.6" stroke="#7cc79a" stroke-width="1.9" fill="none" stroke-linejoin="round" stroke-linecap="round" />
<circle cx="443.2" cy="345.60999999999996" r="10.2" stroke="#7cc79a" stroke-width="1.9" fill="none"/>
<path d="M438.2 345.9 L441.4 349.2 L448.4 342.1" stroke="#7cc79a" stroke-width="1.9" fill="none" stroke-linejoin="round" stroke-linecap="round" />
<circle cx="443.2" cy="374.14" r="10.2" stroke="#7cc79a" stroke-width="1.9" fill="none"/>
<path d="M438.2 374.4 L441.4 377.7 L448.4 370.6" stroke="#7cc79a" stroke-width="1.9" fill="none" stroke-linejoin="round" stroke-linecap="round" />
<path d="M455.0 64.2 H468.0 M455.0 68.5 H464.5 M455.0 72.8 H468.0 M455.0 77.1 H464.5" stroke="#c5c5c5" stroke-width="1.9" fill="none" stroke-linejoin="round" stroke-linecap="round" stroke-linecap="butt"/>
<path d="M862.3 64.2 H875.3 M862.3 68.5 H871.8 M862.3 72.8 H875.3 M862.3 77.1 H871.8" stroke="#c5c5c5" stroke-width="1.9" fill="none" stroke-linejoin="round" stroke-linecap="round" stroke-linecap="butt"/>
<path d="M1126.5 64.2 H1139.5 M1126.5 68.5 H1136.0 M1126.5 72.8 H1139.5 M1126.5 77.1 H1136.0" stroke="#c5c5c5" stroke-width="1.9" fill="none" stroke-linejoin="round" stroke-linecap="round" stroke-linecap="butt"/>
<path d="M617.0 107.8 H630.0 M617.0 112.1 H626.5 M617.0 116.4 H630.0 M617.0 120.7 H626.5" stroke="#c5c5c5" stroke-width="1.9" fill="none" stroke-linejoin="round" stroke-linecap="round" stroke-linecap="butt"/>
<path d="M1072.5 65.2 L1084.5 77.5 M1084.5 65.2 L1072.5 77.5" stroke="#ffffff" stroke-width="1.9" fill="none" stroke-linejoin="round" stroke-linecap="round" />
<path d="M486.0 107.5 L493.5 114.8 L486.0 122" stroke="#a9a9a9" stroke-width="1.6" fill="none" stroke-linejoin="round" stroke-linecap="round" />
<path d="M541.0 107.5 L548.5 114.8 L541.0 122" stroke="#a9a9a9" stroke-width="1.6" fill="none" stroke-linejoin="round" stroke-linecap="round" />
<path d="M590.5 107.5 L598.0 114.8 L590.5 122" stroke="#a9a9a9" stroke-width="1.6" fill="none" stroke-linejoin="round" stroke-linecap="round" />
<path d="M1377.5 62.5 V79.5" stroke="#3e5f80" stroke-width="2.6" fill="none" stroke-linejoin="round" stroke-linecap="round" stroke-linecap="butt"/>
<path d="M1384 63 V79 L1394 71 Z" stroke="#3e5f80" stroke-width="2.2" fill="none" stroke-linejoin="round" stroke-linecap="round" />
<path d="M1419.5 61.5 H1428 M1421.5 61.5 V68.5 L1415.5 80.5 H1432 L1426 68.5 V61.5 M1418 75 H1429.5" stroke="#858585" stroke-width="1.9" fill="none" stroke-linejoin="round" stroke-linecap="round" />
<rect x="1454" y="61.2" width="18.5" height="18" rx="2" stroke="#c5c5c5" stroke-width="1.9"/>
<path d="M1463.3 61.2 V79.2" stroke="#c5c5c5" stroke-width="1.9" fill="none" stroke-linejoin="round" stroke-linecap="round" />
<circle cx="1494" cy="71.2" r="1.9" stroke="#c5c5c5" stroke-width="0" fill="#c5c5c5"/>
<circle cx="1501.6" cy="71.2" r="1.9" stroke="#c5c5c5" stroke-width="0" fill="#c5c5c5"/>
<circle cx="1509.2" cy="71.2" r="1.9" stroke="#c5c5c5" stroke-width="0" fill="#c5c5c5"/>
<path d="M1425.5 756 H1446 M1425.5 761 H1446 M1425.5 766 H1436 M1425.5 771 H1436 M1439.5 764.5 L1446 771 M1446 764.5 L1439.5 771" stroke="#c5c5c5" stroke-width="1.6" fill="none" stroke-linejoin="round" stroke-linecap="round" stroke-linecap="butt"/>
<path d="M1467.6 765.2 L1474.8 757.8 L1481.8 765.2" stroke="#c5c5c5" stroke-width="1.7" fill="none" stroke-linejoin="round" stroke-linecap="round" />
<path d="M1501.5 756.3 L1513.6 767.8 M1513.6 756.3 L1501.5 767.8" stroke="#c5c5c5" stroke-width="1.7" fill="none" stroke-linejoin="round" stroke-linecap="round" />
<path d="M449 1098.8 L457 1106 L449 1113.2" stroke="#c5c5c5" stroke-width="2.0" fill="none" stroke-linejoin="round" stroke-linecap="round" />
<circle cx="33.1" cy="1135.5" r="8.6" stroke="#ffffff" stroke-width="1.7" fill="none"/>
<path d="M29 1131.4 L37.2 1139.6 M37.2 1131.4 L29 1139.6" stroke="#ffffff" stroke-width="1.7" fill="none" stroke-linejoin="round" stroke-linecap="round" />
<path d="M73.8 1127.2 L82.6 1143 H65 Z" stroke="#ffffff" stroke-width="1.7" fill="none" stroke-linejoin="round" stroke-linecap="round" />
<path d="M73.8 1132.5 V1137.5" stroke="#ffffff" stroke-width="1.8" fill="none" stroke-linejoin="round" stroke-linecap="round" />
<circle cx="73.8" cy="1140.3" r="1.0" stroke="#ffffff" stroke-width="0" fill="#ffffff"/>
<path d="M129.5 1134.5 V1128.5 L142.5 1136 L135 1141" stroke="#ffffff" stroke-width="1.7" fill="none" stroke-linejoin="round" stroke-linecap="round" />
<g transform="translate(121.5,1136)"><ellipse cx="6.5" cy="5.5" rx="3.6" ry="4.3" stroke="#fff" stroke-width="1.6"/><path d="M3.8 1.8 Q6.5 -0.8 9.2 1.8 M0.5 3 L3 4 M12.5 3 L10 4 M0.5 6.5 H3 M12.5 6.5 H10 M0.5 10 L3 8.5 M12.5 10 L10 8.5 M3 5.5 H10" stroke="#fff" stroke-width="1.5" stroke-linecap="round"/></g>
<circle cx="1455.5" cy="1135.5" r="3.6" stroke="#ffffff" stroke-width="1.7" fill="none"/>
<path d="M1449.2 1145 Q1450 1139.5 1455.5 1139.5 Q1461 1139.5 1461.8 1145" stroke="#ffffff" stroke-width="1.7" fill="none" stroke-linejoin="round" stroke-linecap="round" />
<path d="M1454 1131 V1127 H1467.5 V1135.5 H1463.5 L1460.5 1138.5" stroke="#ffffff" stroke-width="1.7" fill="none" stroke-linejoin="round" stroke-linecap="round" />
<path d="M1495.5 1141.2 H1511 M1497.2 1141.2 V1133 Q1497.2 1126.5 1503.3 1126.5 Q1505 1126.5 1506 1127.2 M1509.4 1134 V1141.2" stroke="#ffffff" stroke-width="1.7" fill="none" stroke-linejoin="round" stroke-linecap="round" />
<path d="M1501 1143.5 Q1503.3 1146 1505.6 1143.5" stroke="#ffffff" stroke-width="1.7" fill="none" stroke-linejoin="round" stroke-linecap="round" />
<circle cx="1508.3" cy="1130.2" r="4.2" stroke="#007acc" stroke-width="1.6" fill="#ffffff"/>
<path d="M0 0 H9 Q0 0 0 9 Z" fill="#000"/>
<path d="M1536 0 H1527 Q1536 0 1536 9 Z" fill="#000"/>
<path d="M0 1152 H12 Q2 1150 2 1140 V1152 Z" fill="#111"/>
<path d="M0 1152 V1140 Q0 1152 12 1152 Z" fill="#000"/>
<path d="M1536 1152 H1524 Q1534 1150 1534 1140 V1152 Z" fill="#111"/>
</svg>
</body></html>
